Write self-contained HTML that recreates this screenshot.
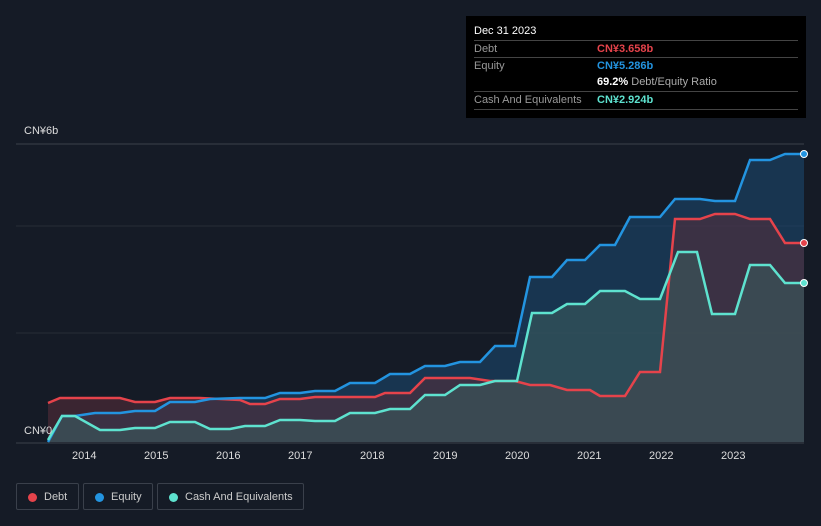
<!DOCTYPE html><html><head><style>
body{margin:0;background:#151b26;width:821px;height:526px;overflow:hidden;font-family:"Liberation Sans",sans-serif;position:relative}
.tt{position:absolute;left:466px;top:16px;width:340px;height:102px;background:#000;color:#fff;font-size:11px}
.tt .r{position:absolute;left:8px;width:324px;border-top:1px solid #444;height:17px;line-height:17px;color:#999}
.tt .v{position:absolute;left:123px;font-weight:bold}
.ax{position:absolute;color:#ddd;font-size:11px}
.lg{position:absolute;top:483px;height:27px;border:1px solid #3a404b;border-radius:2px;color:#ccc;font-size:11px;line-height:27px;box-sizing:border-box;padding-left:27px}
.lg i{position:absolute;left:11px;top:9px;width:9px;height:9px;border-radius:50%}
</style></head><body>
<svg width="821" height="526" style="position:absolute;left:0;top:0">
<line x1="16" y1="144" x2="804" y2="144" stroke="#3a404b"/>
<line x1="16" y1="226" x2="804" y2="226" stroke="#262c37"/>
<line x1="16" y1="333" x2="804" y2="333" stroke="#262c37"/>
<line x1="16" y1="443" x2="804" y2="443" stroke="#3a404b"/>
<polygon fill="#1c4a72" fill-opacity="0.55" points="48,442 62,416 75,416 95,413 120,413 135,411 155,411 170,402 195,402 210,399 240,398 265,398 280,393 300,393 315,391 335,391 350,383 375,383 390,374 410,374 425,366 445,366 460,362 480,362 495,346 515,346 530,277 552,277 567,260 585,260 600,245 615,245 630,217 660,217 675,199 700,199 715,201 735,201 750,160 770,160 785,154 804,154 804,442"/>
<polygon fill="#5a2e3a" fill-opacity="0.55" points="48,442 48,403 60,398 120,398 135,402 155,402 170,398 200,398 240,400 250,404 265,404 280,399 300,399 315,397 375,397 385,393 410,393 425,378 470,378 490,381 515,381 530,385 550,385 567,390 590,390 600,396 625,396 640,372 660,372 675,219 700,219 715,214 735,214 750,219 770,219 785,243 804,243 804,442"/>
<polygon fill="#3a5a5c" fill-opacity="0.6" points="48,442 62,416 75,416 100,430 120,430 135,428 155,428 170,422 195,422 210,429 230,429 245,426 265,426 280,420 300,420 315,421 335,421 350,413 375,413 390,409 410,409 425,395 445,395 460,385 480,385 495,381 517,381 532,313 552,313 567,304 585,304 600,291 625,291 640,299 660,299 678,252 697,252 712,314 735,314 750,265 770,265 785,283 804,283 804,442"/>
<polyline fill="none" stroke="#e5434b" stroke-width="2.5" points="48,403 60,398 120,398 135,402 155,402 170,398 200,398 240,400 250,404 265,404 280,399 300,399 315,397 375,397 385,393 410,393 425,378 470,378 490,381 515,381 530,385 550,385 567,390 590,390 600,396 625,396 640,372 660,372 675,219 700,219 715,214 735,214 750,219 770,219 785,243 804,243"/>
<polyline fill="none" stroke="#2394e0" stroke-width="2.5" points="48,442 62,416 75,416 95,413 120,413 135,411 155,411 170,402 195,402 210,399 240,398 265,398 280,393 300,393 315,391 335,391 350,383 375,383 390,374 410,374 425,366 445,366 460,362 480,362 495,346 515,346 530,277 552,277 567,260 585,260 600,245 615,245 630,217 660,217 675,199 700,199 715,201 735,201 750,160 770,160 785,154 804,154"/>
<polyline fill="none" stroke="#5ee2cf" stroke-width="2.5" points="48,440 62,416 75,416 100,430 120,430 135,428 155,428 170,422 195,422 210,429 230,429 245,426 265,426 280,420 300,420 315,421 335,421 350,413 375,413 390,409 410,409 425,395 445,395 460,385 480,385 495,381 517,381 532,313 552,313 567,304 585,304 600,291 625,291 640,299 660,299 678,252 697,252 712,314 735,314 750,265 770,265 785,283 804,283"/>
<circle cx="804" cy="154" r="3.5" fill="#2394e0" stroke="#fff"/>
<circle cx="804" cy="243" r="3.5" fill="#e5434b" stroke="#fff"/>
<circle cx="804" cy="283" r="3.5" fill="#5ee2cf" stroke="#fff"/>
</svg>
<div class="ax" style="left:24px;top:125px">CN¥6b</div>
<div class="ax" style="left:24px;top:425px">CN¥0</div>
<div class="ax" style="left:72px;top:450px">2014</div><div class="ax" style="left:144px;top:450px">2015</div><div class="ax" style="left:216px;top:450px">2016</div><div class="ax" style="left:288px;top:450px">2017</div><div class="ax" style="left:360px;top:450px">2018</div><div class="ax" style="left:433px;top:450px">2019</div><div class="ax" style="left:505px;top:450px">2020</div><div class="ax" style="left:577px;top:450px">2021</div><div class="ax" style="left:649px;top:450px">2022</div><div class="ax" style="left:721px;top:450px">2023</div>
<div class="tt">
<div style="position:absolute;left:8px;top:9px">Dec 31 2023</div>
<div class="r" style="top:24px">Debt<span class="v" style="color:#e5434b">CN¥3.658b</span></div>
<div class="r" style="top:41px">Equity<span class="v" style="color:#2394e0">CN¥5.286b</span></div>
<div class="r" style="top:58px;border-top:none"><span class="v" style="color:#fff">69.2% <span style="color:#aaa;font-weight:normal">Debt/Equity Ratio</span></span></div>
<div class="r" style="top:75px">Cash And Equivalents<span class="v" style="color:#5ee2cf">CN¥2.924b</span></div>
<div class="r" style="top:93px;height:0"></div>
</div>
<div class="lg" style="left:16px;width:63px"><i style="background:#e5434b"></i>Debt</div>
<div class="lg" style="left:83px;width:70px"><i style="background:#2394e0"></i>Equity</div>
<div class="lg" style="left:157px;width:147px"><i style="background:#5ee2cf"></i>Cash And Equivalents</div>
</body></html>
